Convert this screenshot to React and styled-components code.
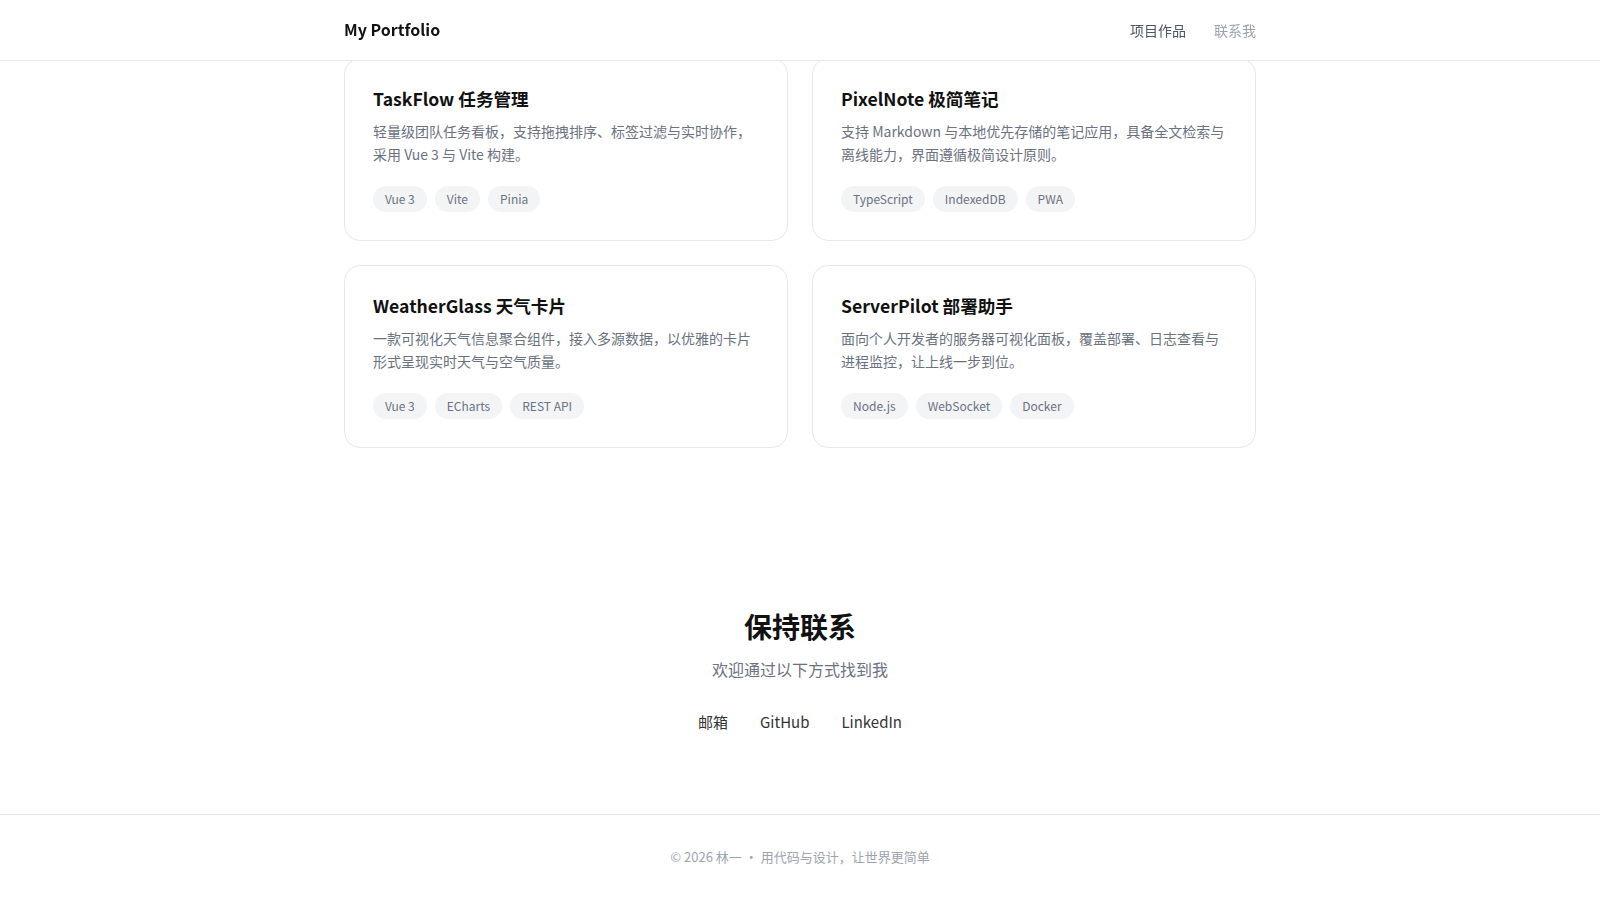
import React from "react";
import styled, { createGlobalStyle } from "styled-components";

const GlobalStyle = createGlobalStyle`
  html, body { margin: 0; padding: 0; background: #ffffff; }
  body {
    font-family: "Noto Sans CJK SC", "Noto Sans", sans-serif;
    color: #111827;
    -webkit-font-smoothing: antialiased;
  }
  * { box-sizing: border-box; }
`;

const Page = styled.div`
  min-height: 100vh;
  display: flex;
  flex-direction: column;
`;

const Header = styled.header`
  position: sticky;
  top: 0;
  z-index: 10;
  height: 61px;
  background: rgba(255, 255, 255, 0.85);
  backdrop-filter: blur(12px);
  -webkit-backdrop-filter: blur(12px);
  border-bottom: 1px solid #e8e8ec;
`;

const Container = styled.div`
  width: 100%;
  max-width: 960px;
  margin: 0 auto;
  padding: 0 24px;
`;

const HeaderInner = styled(Container)`
  height: 100%;
  display: flex;
  align-items: center;
  justify-content: space-between;
`;

const Logo = styled.a`
  font-size: 1rem;
  font-weight: 700;
  color: #111111;
  text-decoration: none;
  margin-top: -2px;
`;

const Nav = styled.nav`
  display: flex;
  gap: 28px;
`;

const NavLink = styled.a`
  font-size: 0.875rem;
  color: ${(p) => (p.$active ? "#4b5563" : "#9ca3af")};
  text-decoration: none;
`;

const Main = styled.main`
  flex: 1;
`;

const ProjectsSection = styled.section`
  margin-top: -3px;
  padding: 0 0 80px;
`;

const ContactSection = styled.section`
  padding: 80px 0 79px;
  text-align: center;
`;

const SectionTitle = styled.h2`
  margin: 0 0 13px;
  font-size: 1.75rem;
  line-height: 1.3;
  font-weight: 700;
  color: #111;
`;

const SectionSub = styled.p`
  margin: 0;
  font-size: 1rem;
  line-height: 1.6;
  color: #6b7280;
`;

const Grid = styled.div`
  display: grid;
  grid-template-columns: repeat(2, 1fr);
  gap: 24px;
`;

const Card = styled.article`
  background: #ffffff;
  border: 1px solid #e8e8ec;
  border-radius: 16px;
  padding: 29px 28px 28px;
`;

const CardTitle = styled.h3`
  margin: 0 0 9px;
  font-size: 1.1rem;
  line-height: 1.3;
  font-weight: 700;
  color: #111111;
`;

const CardDesc = styled.p`
  margin: 0 0 20px;
  font-size: 0.875rem;
  line-height: 1.65;
  color: #6b7280;
`;

const Tags = styled.div`
  display: flex;
  flex-wrap: wrap;
  gap: 8px;
`;

const Tag = styled.span`
  padding: 4px 12px;
  border-radius: 999px;
  background: #f3f4f6;
  color: #6b7280;
  font-size: 0.75rem;
  line-height: 1.5;
`;

const ContactLinks = styled.div`
  margin-top: 27px;
  display: flex;
  justify-content: center;
  gap: 32px;
`;

const ContactLink = styled.a`
  font-size: 0.9375rem;
  line-height: 1.6;
  color: #333333;
  text-decoration: none;
`;

const Footer = styled.footer`
  border-top: 1px solid #e8e8ec;
  padding: 32px 0;
  text-align: center;
  font-size: 0.8125rem;
  line-height: 1.6;
  color: #9ca3af;
`;

const projects = [
  {
    title: "TaskFlow 任务管理",
    desc: "轻量级团队任务看板，支持拖拽排序、标签过滤与实时协作，采用 Vue 3 与 Vite 构建。",
    tags: ["Vue 3", "Vite", "Pinia"],
  },
  {
    title: "PixelNote 极简笔记",
    desc: "支持 Markdown 与本地优先存储的笔记应用，具备全文检索与离线能力，界面遵循极简设计原则。",
    tags: ["TypeScript", "IndexedDB", "PWA"],
  },
  {
    title: "WeatherGlass 天气卡片",
    desc: "一款可视化天气信息聚合组件，接入多源数据，以优雅的卡片形式呈现实时天气与空气质量。",
    tags: ["Vue 3", "ECharts", "REST API"],
  },
  {
    title: "ServerPilot 部署助手",
    desc: "面向个人开发者的服务器可视化面板，覆盖部署、日志查看与进程监控，让上线一步到位。",
    tags: ["Node.js", "WebSocket", "Docker"],
  },
];

export default function App() {
  return (
    <>
      <GlobalStyle />
      <Page>
        <Header>
          <HeaderInner>
            <Logo href="#">My Portfolio</Logo>
            <Nav>
              <NavLink href="#projects" $active>项目作品</NavLink>
              <NavLink href="#contact">联系我</NavLink>
            </Nav>
          </HeaderInner>
        </Header>

        <Main>
          <ProjectsSection id="projects">
            <Container>
              <Grid>
                {projects.map((p) => (
                  <Card key={p.title}>
                    <CardTitle>{p.title}</CardTitle>
                    <CardDesc>{p.desc}</CardDesc>
                    <Tags>
                      {p.tags.map((t) => (
                        <Tag key={t}>{t}</Tag>
                      ))}
                    </Tags>
                  </Card>
                ))}
              </Grid>
            </Container>
          </ProjectsSection>

          <ContactSection id="contact">
            <Container>
              <SectionTitle>保持联系</SectionTitle>
              <SectionSub>欢迎通过以下方式找到我</SectionSub>
              <ContactLinks>
                <ContactLink href="#">邮箱</ContactLink>
                <ContactLink href="#">GitHub</ContactLink>
                <ContactLink href="#">LinkedIn</ContactLink>
              </ContactLinks>
            </Container>
          </ContactSection>
        </Main>

        <Footer>© 2026 林一 · 用代码与设计，让世界更简单</Footer>
      </Page>
    </>
  );
}
